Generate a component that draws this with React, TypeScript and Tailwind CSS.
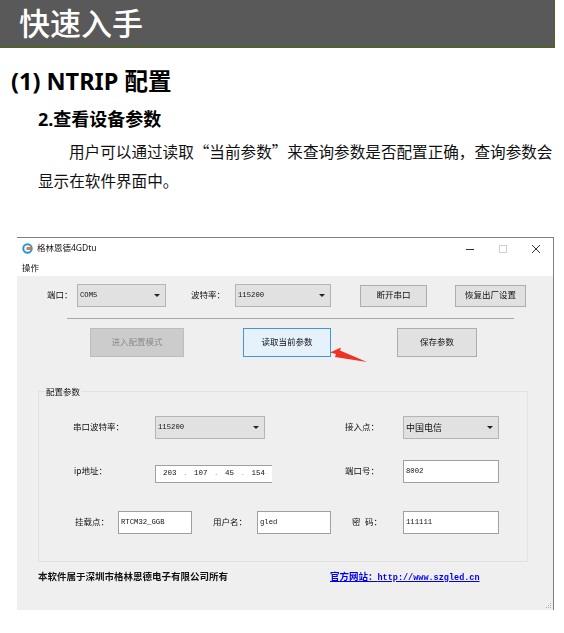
const cjk = "font-['Noto_Sans','Noto_Sans_CJK_SC',sans-serif]"
const cjkOnly = "font-['Noto_Sans_CJK_SC',sans-serif]"
const mono = "font-['Liberation_Mono','Noto_Sans_CJK_SC',monospace]"

const Label = ({ children, className = '' }: { children: React.ReactNode; className?: string }) => (
	<span className={`shrink-0 text-[8.5px] whitespace-pre text-[#111] ${className}`}>{children}</span>
)

const Combo = ({ value, className = '', cn = false }: { value: string; className?: string; cn?: boolean }) => (
	<div
		className={`flex h-[23px] shrink-0 items-center justify-between border border-[#b4b4b4] bg-[#e1e1e1] pr-[5px] pl-[2px] text-[#111] ${className} ${cn ? 'text-[9px]' : `${mono} text-[7.25px]`}`}
	>
		<span>{value}</span>
		<span className="h-0 w-0 border-x-[3.5px] border-t-[3.5px] border-x-transparent border-t-[#222]" />
	</div>
)

const Btn = ({ children, className = '' }: { children: React.ReactNode; className?: string }) => (
	<div
		className={`flex shrink-0 items-center justify-center border border-[#adadad] bg-[#e1e1e1] text-[8.5px] text-[#111] ${className}`}
	>
		{children}
	</div>
)

const Field = ({ value, className = '' }: { value: string; className?: string }) => (
	<div
		className={`flex h-[23px] shrink-0 items-center border border-[#a0a0a0] bg-white pl-[2px] ${mono} text-[7.25px] text-[#111] ${className}`}
	>
		{value}
	</div>
)

export default function App() {
	return (
		<div className={`h-[633px] w-[564px] overflow-hidden bg-white ${cjk}`}>
			<div className="flex h-[48px] w-[555px] items-center border-r border-b-2 border-[#4f6228] bg-[#595959] pl-[19px] text-[31px] leading-none font-medium text-white">
				快速入手
			</div>

			<h1 className="mt-[16px] ml-[11px] h-[34px] text-[23.5px] leading-[34px] font-bold text-black">
				(1) NTRIP 配置
			</h1>
			<h2 className="mt-[8px] ml-[38px] h-[26px] text-[18px] leading-[26px] font-bold text-black">
				2.查看设备参数
			</h2>
			<p className={`mt-[5px] ml-[38px] w-[516px] indent-[31px] text-[15.6px] leading-[29px] text-[#111] ${cjkOnly}`}>
				用户可以通过读取“当前参数”来查询参数是否配置正确，查询参数会显示在软件界面中。
			</p>

			{/* software window, slightly soft like the scaled capture */}
			<div className="relative mt-[42px] ml-[17px] w-[537px] border-t border-r border-[#808080] blur-[0.45px]">
				<div className="h-[38px] bg-white">
					<div className="flex h-[21px] items-center">
						<svg width="11" height="11" viewBox="0 0 11 11" className="ml-[5px] shrink-0">
							<circle cx="5.5" cy="5.5" r="4.2" fill="none" stroke="#1e9ad6" strokeWidth="2" />
							<rect x="4.5" y="4" width="5" height="3" fill="#e8743b" />
						</svg>
						<span className="ml-[4px] text-[8.5px] whitespace-nowrap text-[#111]">格林恩德4GDtu</span>
						<svg width="10" height="10" viewBox="0 0 10 10" className="ml-auto shrink-0">
							<path d="M1 5.5H9" stroke="#333" strokeWidth="1" />
						</svg>
						<div className="ml-[24px] h-[8px] w-[8px] shrink-0 border border-[#d0d0d0]" />
						<svg width="10" height="10" viewBox="0 0 10 10" className="mr-[12px] ml-[24px] shrink-0">
							<path d="M1 1L9 9M9 1L1 9" stroke="#333" strokeWidth="1" />
						</svg>
					</div>
					<div className="mt-[3px] ml-[5px] text-[8.5px] leading-[12px] text-[#111]">操作</div>
				</div>

				<div className="relative h-[334px] bg-[#efefef] pt-[8px]">
					<div className="flex h-[23px] items-center">
						<Label className="ml-[30px] w-[30px]">端口：</Label>
						<Combo value="COM5" className="w-[89px]" />
						<Label className="ml-[25px] w-[44px]">波特率：</Label>
						<Combo value="115200" className="w-[96px]" />
						<Btn className="ml-[29px] h-[22px] w-[67px]">断开串口</Btn>
						<Btn className="ml-[28px] h-[22px] w-[71px]">恢复出厂设置</Btn>
					</div>

					<div className="mt-[11px] ml-[50px] h-px w-[447px] bg-[#a8a8a8]" />

					<div className="mt-[9px] flex h-[29px]">
						<div className="ml-[73px] flex w-[94px] items-center justify-center border border-[#bdbdbd] bg-[#cccccc] text-[8.5px] text-[#8a8a8a]">
							进入配置模式
						</div>
						<div className="ml-[59px] flex w-[88px] items-center justify-center border border-[#3c98e0] bg-[#e5f1fb] text-[8.5px] text-[#111]">
							读取当前参数
						</div>
						<Btn className="ml-[66px] w-[80px]">保存参数</Btn>
					</div>

					<div className="relative mt-[34px] ml-[21px] h-[171px] w-[490px] border border-[#e2e2e2] pt-[24px]">
						<span className="absolute -top-[6px] left-[6px] bg-[#efefef] px-px text-[8.5px] leading-[11px] text-[#111]">
							配置参数
						</span>
						<div className="flex h-[23px] items-center">
							<Label className="ml-[34px] w-[82px]">串口波特率：</Label>
							<Combo value="115200" className="w-[110px]" />
							<Label className="ml-[80px] w-[58px]">接入点：</Label>
							<Combo value="中国电信" cn className="w-[96px]" />
						</div>
						<div className="mt-[21px] flex h-[23px] items-center">
							<Label className="ml-[35px] w-[81px]">ip地址：</Label>
							<div
								className={`flex h-[18px] w-[117px] shrink-0 items-center gap-[6.5px] self-end border-t border-b border-l border-[#a0a0a0] bg-white pl-[7px] ${mono} text-[7.5px] text-[#111]`}
							>
								<span>203</span>
								<span className="text-[#999]">.</span>
								<span>107</span>
								<span className="text-[#999]">.</span>
								<span>45</span>
								<span className="text-[#999]">.</span>
								<span>154</span>
							</div>
							<Label className="ml-[73px] w-[58px]">端口号：</Label>
							<Field value="8002" className="w-[96px]" />
						</div>
						<div className="mt-[28px] flex h-[23px] items-center">
							<Label className="ml-[36px] w-[43px]">挂载点：</Label>
							<Field value="RTCM32_GGB" className="w-[74px]" />
							<Label className="ml-[21px] w-[44px]">用户名：</Label>
							<Field value="gled" className="w-[74px]" />
							<Label className="ml-[21px] w-[51px]">密  码：</Label>
							<Field value="111111" className="w-[96px]" />
						</div>
					</div>

					<div className="mt-[8px] ml-[21px] flex h-[14px] items-center">
						<span className="w-[292px] shrink-0 text-[9.5px] font-bold text-[#111]">
							本软件属于深圳市格林恩德电子有限公司所有
						</span>
						<span className="shrink-0 text-[9.5px] font-bold text-[#0000ee] underline">
							官方网站：<span className={`${mono} text-[8.5px]`}>http://www.szgled.cn</span>
						</span>
					</div>

					<svg width="7" height="7" viewBox="0 0 7 7" className="absolute right-[1px] bottom-[1px]">
						<path d="M5 1h1v1H5zM3 3h1v1H3zM5 3h1v1H5zM1 5h1v1H1zM3 5h1v1H3zM5 5h1v1H5z" fill="#b0b0b0" />
					</svg>
				</div>

				<svg width="40" height="18" viewBox="0 0 40 18" className="absolute top-[108px] left-[313px]">
					<path d="M0 6.5L11 1.5L10 4.5L37 16L5 11L6 8Z" fill="#ee3322" />
				</svg>
			</div>
		</div>
	)
}
